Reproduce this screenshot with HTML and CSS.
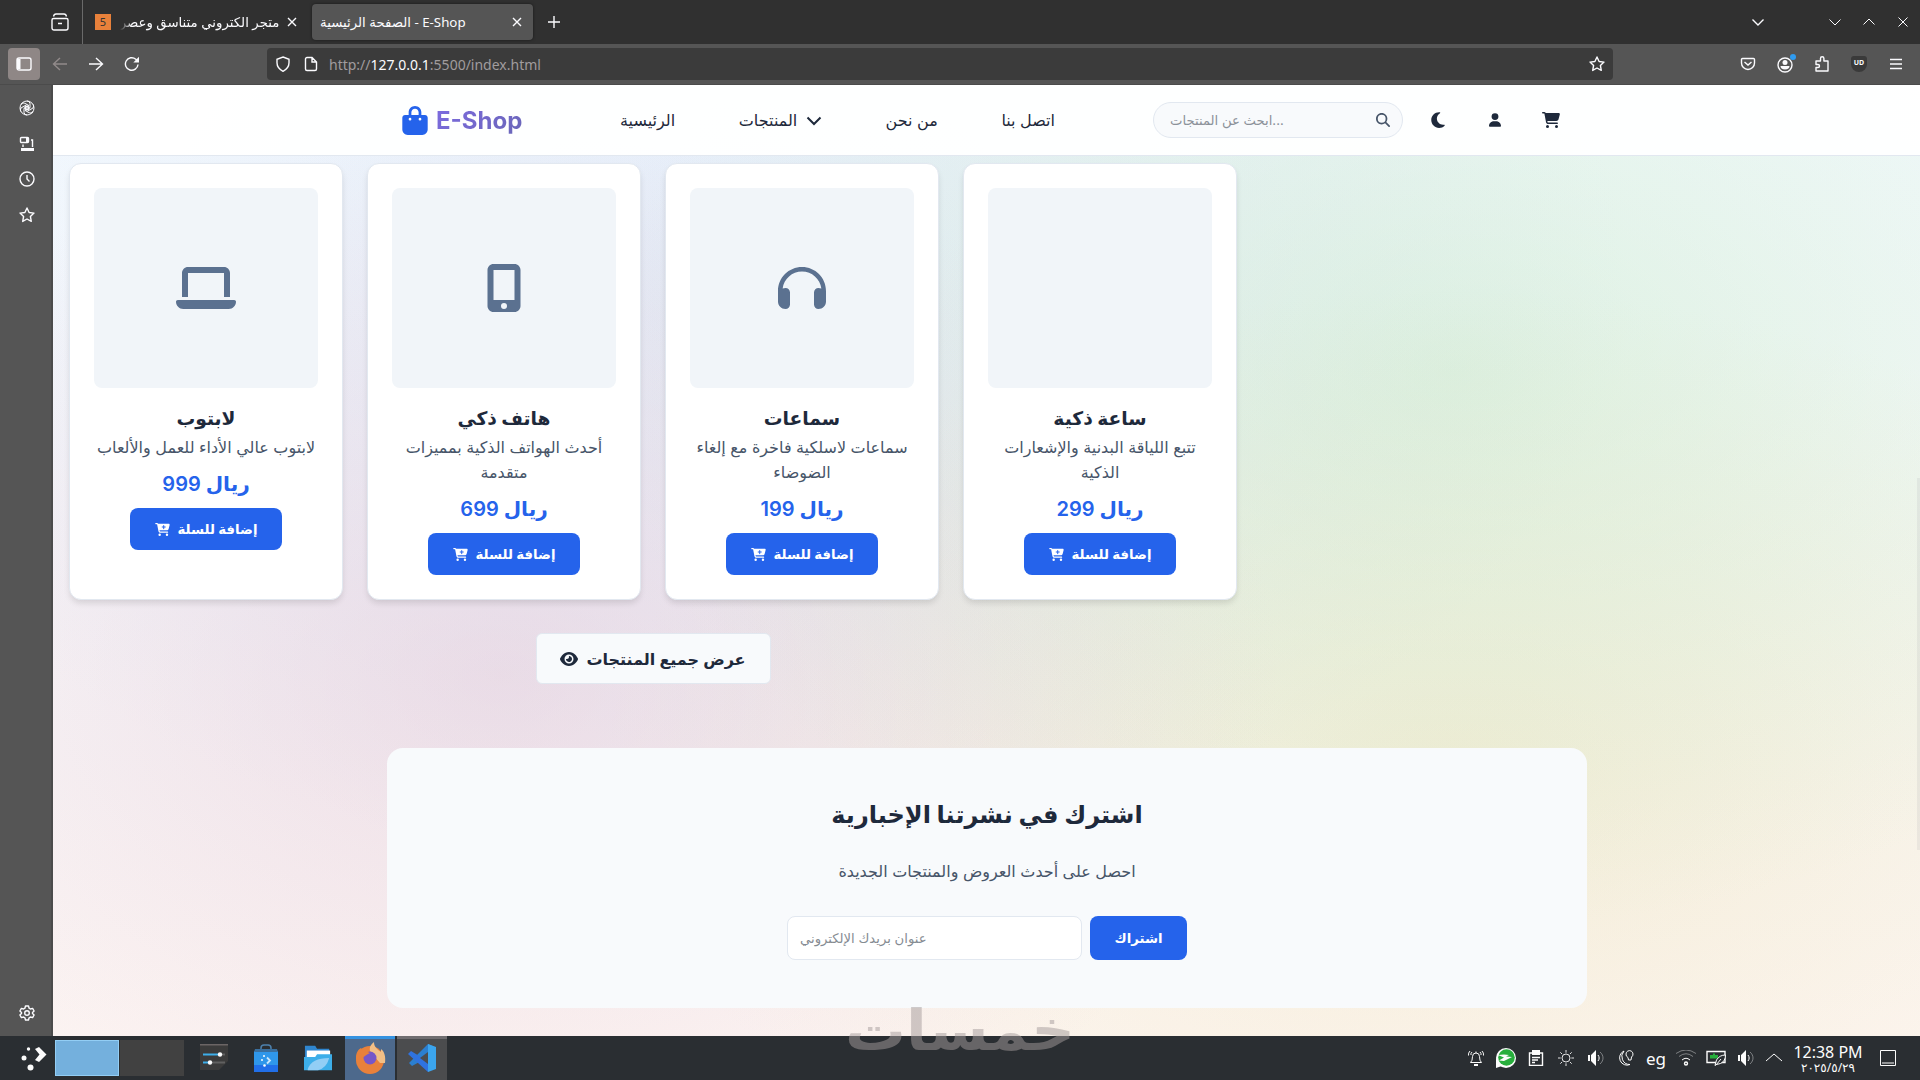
FILE: index.html
```html
<!DOCTYPE html>
<html lang="ar">
<head>
    <meta charset="UTF-8">
    <title>الصفحة الرئيسية - E-Shop</title>
    <link rel="stylesheet" href="styles.css">
</head>
<body>
    <!-- icon sprite -->
    <svg class="sprite">
        <symbol id="bag" viewBox="0 0 448 512"><path d="M160 112c0-35.3 28.7-64 64-64s64 28.7 64 64v48H160V112zm-48 48H48c-26.5 0-48 21.5-48 48V416c0 53 43 96 96 96H352c53 0 96-43 96-96V208c0-26.5-21.5-48-48-48H336V112C336 50.1 285.9 0 224 0S112 50.1 112 112v48zm24 48a24 24 0 1 1 0 48 24 24 0 1 1 0-48zm152 24a24 24 0 1 1 48 0 24 24 0 1 1 -48 0z"/></symbol>
        <symbol id="moon" viewBox="0 0 384 512"><path d="M223.5 32C100 32 0 132.3 0 256S100 480 223.5 480c60.6 0 115.5-24.2 155.8-63.4c5-4.9 6.3-12.5 3.1-18.7s-10.1-9.7-17-8.5c-9.8 1.7-19.8 2.6-30.1 2.6c-96.9 0-175.5-78.8-175.5-176c0-65.8 36-123.1 89.3-153.3c6.1-3.5 9.2-10.5 7.7-17.3s-7.3-11.9-14.3-12.5c-6.3-.5-12.6-.8-19-.8z"/></symbol>
        <symbol id="user" viewBox="0 0 448 512"><path d="M224 256A128 128 0 1 0 224 0a128 128 0 1 0 0 256zm-45.7 48C79.8 304 0 383.8 0 482.3C0 498.7 13.3 512 29.7 512H418.3c16.4 0 29.7-13.3 29.7-29.7C448 383.8 368.2 304 269.7 304H178.3z"/></symbol>
        <symbol id="cart" viewBox="0 0 576 512"><path d="M0 24C0 10.7 10.7 0 24 0H69.5c22 0 41.5 12.8 50.6 32h411c26.3 0 45.5 25 38.6 50.4l-41 152.3c-8.5 31.4-37 53.3-69.5 53.3H170.7l5.4 28.5c2.2 11.3 12.1 19.5 23.6 19.5H488c13.3 0 24 10.7 24 24s-10.7 24-24 24H199.7c-34.6 0-64.3-24.6-70.7-58.5L77.4 54.5c-.7-3.8-4-6.5-7.9-6.5H24C10.7 48 0 37.3 0 24zM128 464a48 48 0 1 1 96 0 48 48 0 1 1 -96 0zm336-48a48 48 0 1 1 0 96 48 48 0 1 1 0-96z"/></symbol>
        <symbol id="cart-plus" viewBox="0 0 576 512"><path fill-rule="evenodd" d="M0 24C0 10.7 10.7 0 24 0H69.5c22 0 41.5 12.8 50.6 32h411c26.3 0 45.5 25 38.6 50.4l-41 152.3c-8.5 31.4-37 53.3-69.5 53.3H170.7l5.4 28.5c2.2 11.3 12.1 19.5 23.6 19.5H488c13.3 0 24 10.7 24 24s-10.7 24-24 24H199.7c-34.6 0-64.3-24.6-70.7-58.5L77.4 54.5c-.7-3.8-4-6.5-7.9-6.5H24C10.7 48 0 37.3 0 24zM128 464a48 48 0 1 1 96 0 48 48 0 1 1 -96 0zm336-48a48 48 0 1 1 0 96 48 48 0 1 1 0-96zM252 160c0 11 9 20 20 20h44v44c0 11 9 20 20 20s20-9 20-20V180h44c11 0 20-9 20-20s-9-20-20-20H356V96c0-11-9-20-20-20s-20 9-20 20v44H272c-11 0-20 9-20 20z"/></symbol>
        <symbol id="search" viewBox="0 0 512 512"><path d="M416 208c0 45.9-14.9 88.3-40 122.7L502.6 457.4c12.5 12.5 12.5 32.8 0 45.3s-32.8 12.5-45.3 0L330.7 376c-34.4 25.2-76.8 40-122.7 40C93.1 416 0 322.9 0 208S93.1 0 208 0S416 93.1 416 208zM208 352a144 144 0 1 0 0-288 144 144 0 1 0 0 288z"/></symbol>
        <symbol id="eye" viewBox="0 0 576 512"><path d="M288 32c-80.8 0-145.5 36.8-192.6 80.6C48.6 156 17.3 208 2.5 243.7c-3.3 7.9-3.3 16.7 0 24.6C17.3 304 48.6 356 95.4 399.4C142.5 443.2 207.2 480 288 480s145.5-36.8 192.6-80.6c46.8-43.5 78.1-95.4 93-131.1c3.3-7.9 3.3-16.7 0-24.6c-14.9-35.7-46.2-87.7-93-131.1C433.5 68.8 368.8 32 288 32zM144 256a144 144 0 1 1 288 0 144 144 0 1 1 -288 0zm144-64c0 35.3-28.7 64-64 64c-7.1 0-13.9-1.2-20.3-3.3c-5.5-1.8-11.9 1.6-11.7 7.4c.3 6.9 1.3 13.8 3.2 20.7c13.7 51.2 66.4 81.6 117.6 67.9s81.6-66.4 67.9-117.6c-11.1-41.5-47.8-69.4-88.6-71.1c-5.8-.2-9.2 6.1-7.4 11.7c2.1 6.4 3.3 13.2 3.3 20.3z"/></symbol>
        <symbol id="laptop" viewBox="0 0 640 512"><path d="M128 32C92.7 32 64 60.7 64 96V352h64V96H512V352h64V96c0-35.3-28.7-64-64-64H128zM19.2 384C8.6 384 0 392.6 0 403.2C0 445.6 34.4 480 76.8 480H563.2c42.4 0 76.8-34.4 76.8-76.8c0-10.6-8.6-19.2-19.2-19.2H19.2z"/></symbol>
        <symbol id="mobile" viewBox="0 0 384 512"><path d="M16 64C16 28.7 44.7 0 80 0H304c35.3 0 64 28.7 64 64V448c0 35.3-28.7 64-64 64H80c-35.3 0-64-28.7-64-64V64zM224 448a32 32 0 1 0 -64 0 32 32 0 1 0 64 0zM304 64H80V384H304V64z"/></symbol>
        <symbol id="headphones" viewBox="0 0 512 512"><path d="M256 80C149.9 80 62.4 159.4 49.6 262c9.4-3.8 19.6-6 30.4-6c26.5 0 48 21.5 48 48V432c0 26.5-21.5 48-48 48c-44.2 0-80-35.8-80-80V384 336 288C0 146.6 114.6 32 256 32s256 114.6 256 256v48 48 16c0 44.2-35.8 80-80 80c-26.5 0-48-21.5-48-48V304c0-26.5 21.5-48 48-48c10.8 0 21 2.1 30.4 6C449.6 159.4 362.1 80 256 80z"/></symbol>
        <symbol id="close" viewBox="0 0 16 16"><path class="line bold" d="M4 4l8 8M12 4l-8 8"/></symbol>
        <symbol id="star" viewBox="0 0 16 16"><path class="line bold" stroke-linejoin="round" d="M8 1l2.100 4.500 4.900.6-3.600 3.400.9 4.900L8 12l-4.300 2.400.9-4.900L1 6.100l4.900-.6z"/></symbol>
        <symbol id="petal" viewBox="0 0 16 16"><path class="line" d="M8 1A3 3 0 0 1 11 3.500V7.800L8 9.500 5 7.800"/></symbol>
        <symbol id="volume" viewBox="0 0 16 16"><path d="M0 5h2v6H0zM3 5L8 0v16L3 11z"/><path class="line" d="M10 5c1.500 2 1.500 4 0 6"/><path class="line dim" d="M12 2c4 3.500 4 8.500 0 12"/></symbol>
    </svg>

    <div class="browser">
        <div class="tabs">
            <div class="tabs-start">
                <svg class="icon i18" viewBox="0 0 18 18"><path class="line bold" d="M2.500 5.500h13a1.500 1.500 0 0 1 1.500 1.500v8a2 2 0 0 1-2 2H3a2 2 0 0 1-2-2V7a1.500 1.500 0 0 1 1.500-1.500zM2.500 3.500Q3 1 5 1h8q2 0 2.500 2.500M7 10.500h4"/></svg>
            </div>
            <div class="tab">
                <span class="favicon">5</span>
                <span class="tab-title fade" dir="rtl">متجر الكتروني متناسق وعصر</span>
                <svg class="icon i16"><use href="#close"/></svg>
            </div>
            <div class="tab active">
                <span class="tab-title" dir="ltr">الصفحة الرئيسية - E-Shop</span>
                <svg class="icon i16"><use href="#close"/></svg>
            </div>
            <svg class="icon i16 new-tab" viewBox="0 0 16 16"><path class="line bold" d="M8 2v12M2 8h12"/></svg>
            <div class="window-buttons">
                <svg class="icon i16 all-tabs" viewBox="0 0 16 16"><path class="line bold" d="M2.500 5.500L8 11l5.500-5.500"/></svg>
                <svg class="icon i16" viewBox="0 0 16 16"><path class="line" d="M2.500 5.500L8 11l5.500-5.500"/></svg>
                <svg class="icon i16" viewBox="0 0 16 16"><path class="line" d="M2.500 10.500L8 5l5.500 5.500"/></svg>
                <svg class="icon i16" viewBox="0 0 16 16"><path class="line" d="M3.500 3.500l9 9M12.500 3.500l-9 9"/></svg>
            </div>
        </div>

        <div class="toolbar">
            <div class="sidebar-btn">
                <svg class="icon i16" viewBox="0 0 16 16"><rect class="line bold" x="1" y="2" width="14" height="12" rx="2"/><path d="M1 3h3.500v10H1z"/></svg>
            </div>
            <svg class="icon i16 back" viewBox="0 0 16 16"><path class="line bold" d="M15 8H1.500M8 2L1.500 8 8 14"/></svg>
            <svg class="icon i16 forward" viewBox="0 0 16 16"><path class="line bold" d="M1 8h13.500M8 2l6.500 6L8 14"/></svg>
            <svg class="icon i16 reload" viewBox="0 0 16 16"><path class="line bold" d="M14 8.500A6.300 6.300 0 1 1 11.800 3.200L14 5"/><path d="M15 .8V6.500H9.300z"/></svg>
            <div class="urlbar">
                <svg class="icon i16" viewBox="0 0 16 16"><path class="line bold" d="M8 1l6 2.300v3.500c0 4-2.500 6.700-6 8.500-3.500-1.800-6-4.500-6-8.500V3.300z"/></svg>
                <svg class="icon i16" viewBox="0 0 16 16"><path class="line bold" d="M4 1.500h5L13.500 6v7a1.500 1.500 0 0 1-1.500 1.500H4A1.500 1.500 0 0 1 2.500 13V3A1.500 1.500 0 0 1 4 1.500zM9 1.500V6h4.500"/></svg>
                <span class="url">http://<b>127.0.0.1</b>:5500/index.html</span>
                <svg class="icon i16"><use href="#star"/></svg>
            </div>
            <div class="toolbar-end">
                <svg class="icon i16" viewBox="0 0 16 16"><path class="line bold" d="M2.500 2.500h11a1 1 0 0 1 1 1V7a6.500 6.500 0 0 1-13 0V3.500a1 1 0 0 1 1-1zM4.500 6L8 9l3.500-3"/></svg>
                <div class="account">
                    <svg class="icon i16" viewBox="0 0 16 16"><circle class="line bold" cx="8" cy="8" r="7"/><circle cx="8" cy="5.500" r="2.500"/><path d="M3.500 9h9c0 2-1.500 3.500-4.500 3.500S3.500 11 3.500 9z"/></svg>
                    <span class="dot"></span>
                </div>
                <svg class="icon i16" viewBox="0 0 16 16"><path class="line bold" stroke-linejoin="round" d="M2 5h4.500V2.500a1.700 1.700 0 0 1 3.400 0V5H14v10H2v-3.500h2a1.500 1.500 0 0 0 0-3H2z"/></svg>
                <span class="ublock">UD</span>
                <svg class="icon i16" viewBox="0 0 16 16"><path class="line bold" d="M2 3.500h12M2 8h12M2 12.500h12"/></svg>
            </div>
        </div>

        <div class="main">
            <div class="sidebar">
                <svg class="icon i16" viewBox="0 0 16 16">
                    <use href="#petal"/>
                    <use href="#petal" transform="rotate(60 8 8)"/>
                    <use href="#petal" transform="rotate(120 8 8)"/>
                    <use href="#petal" transform="rotate(180 8 8)"/>
                    <use href="#petal" transform="rotate(240 8 8)"/>
                    <use href="#petal" transform="rotate(300 8 8)"/>
                    <circle class="line" cx="8" cy="8" r="7"/>
                </svg>
                <svg class="icon i16" viewBox="0 0 16 16"><rect class="line bold" x="1.500" y="1.500" width="8" height="5" rx="1"/><path d="M7 1.500h2.500v5H7z"/><path class="line bold" d="M12 4h1.500v7M4 8.500V11"/><path d="M2 12h13v3H2z"/></svg>
                <svg class="icon i16" viewBox="0 0 16 16"><circle class="line bold" cx="8" cy="8" r="7"/><path class="line bold" d="M8 4v4l2.500 2.500"/></svg>
                <svg class="icon i16"><use href="#star"/></svg>
                <svg class="icon i16 settings" viewBox="0 0 16 16"><circle class="line bold" cx="8" cy="8" r="2.300"/><path class="line bold" stroke-linejoin="round" d="M6.500 1h3l.6 2.200 1.300.8 2.200-.6 1.500 2.600L13.500 7.500v1l1.600 1.500-1.500 2.600-2.200-.6-1.300.8L9.500 15h-3l-.6-2.200-1.300-.8-2.200.6L.9 10l1.600-1.500v-1L.9 6l1.500-2.600 2.200.6 1.300-.8z"/></svg>
            </div>

            <div class="page">
                <nav class="navbar">
                    <div class="nav-inner">
                        <div class="logo">
                            <svg class="logo-icon"><use href="#bag"/></svg>
                            <span>E-Shop</span>
                        </div>
                        <div class="nav-links">
                            <a>الرئيسية</a>
                            <a>المنتجات <svg class="chevron" viewBox="0 0 16 10"><path d="M1.500 1.500L8 8l6.500-6.500"/></svg></a>
                            <a>من نحن</a>
                            <a>اتصل بنا</a>
                        </div>
                        <div class="search-box">
                            <span>ابحث عن المنتجات...</span>
                            <svg class="search-icon"><use href="#search"/></svg>
                        </div>
                        <div class="nav-icons">
                            <svg class="moon"><use href="#moon"/></svg>
                            <svg class="user"><use href="#user"/></svg>
                            <svg class="cart"><use href="#cart"/></svg>
                        </div>
                    </div>
                </nav>

                <section class="products">
                    <div class="product-grid">
                        <div class="product-card">
                            <div class="product-image"><svg class="w60"><use href="#laptop"/></svg></div>
                            <h3>لابتوب</h3>
                            <p>لابتوب عالي الأداء للعمل والألعاب</p>
                            <div class="price">999 ريال</div>
                            <button class="btn-add"><svg><use href="#cart-plus"/></svg><span>إضافة للسلة</span></button>
                        </div>
                        <div class="product-card">
                            <div class="product-image"><svg class="w36"><use href="#mobile"/></svg></div>
                            <h3>هاتف ذكي</h3>
                            <p>أحدث الهواتف الذكية بمميزات<br>متقدمة</p>
                            <div class="price">699 ريال</div>
                            <button class="btn-add"><svg><use href="#cart-plus"/></svg><span>إضافة للسلة</span></button>
                        </div>
                        <div class="product-card">
                            <div class="product-image"><svg class="w48"><use href="#headphones"/></svg></div>
                            <h3>سماعات</h3>
                            <p>سماعات لاسلكية فاخرة مع إلغاء<br>الضوضاء</p>
                            <div class="price">199 ريال</div>
                            <button class="btn-add"><svg><use href="#cart-plus"/></svg><span>إضافة للسلة</span></button>
                        </div>
                        <div class="product-card">
                            <div class="product-image"></div>
                            <h3>ساعة ذكية</h3>
                            <p>تتبع اللياقة البدنية والإشعارات<br>الذكية</p>
                            <div class="price">299 ريال</div>
                            <button class="btn-add"><svg><use href="#cart-plus"/></svg><span>إضافة للسلة</span></button>
                        </div>
                    </div>
                    <button class="btn-all"><svg><use href="#eye"/></svg><span>عرض جميع المنتجات</span></button>
                </section>

                <section class="newsletter">
                    <h2>اشترك في نشرتنا الإخبارية</h2>
                    <p>احصل على أحدث العروض والمنتجات الجديدة</p>
                    <div class="newsletter-form">
                        <div class="email-input"><span>عنوان بريدك الإلكتروني</span></div>
                        <button class="btn-subscribe"><span>اشتراك</span></button>
                    </div>
                </section>
                <div class="scrollbar"></div>
            </div>
        </div>
    </div>

    <div class="taskbar">
        <svg class="launcher" viewBox="0 0 26 26"><circle cx="7.500" cy="4" r="1.700"/><circle cx="3" cy="13" r="2.500"/><circle cx="9.500" cy="22.500" r="3"/><path d="M14 4l4-2 7.500 7.500L18 17l-4-2 4.500-5.500z"/></svg>
        <div class="pager current"></div>
        <div class="pager"></div>
        <div class="launchers">
            <svg viewBox="0 0 28 28"><path fill="#3b3b3b" d="M0 1h28v16L19 26H0z"/><path fill="#6b6565" d="M0 0h28v1.500H0z"/><path fill="#3daee9" d="M3 9.500h16v2H3zM3 17.500h6v2H3z"/><path fill="#606060" d="M21 9.500h4v2h-4zM11 17.500h14v2H11z"/><circle cx="20" cy="10.500" r="2.200"/><circle cx="10" cy="18.500" r="2.200"/></svg>
            <svg viewBox="0 0 28 28"><path fill="none" stroke="#4d81ad" stroke-width="1.500" d="M9 8V4q0-3 3-3h4q3 0 3 3v4"/><path fill="#2f97ea" d="M2 7h24v20H2z"/><path fill="#3a6f9e" d="M3 5h22l1 3H2z"/><path fill="#216fe8" d="M2 21h24v7H2z"/><circle cx="12" cy="12" r="1"/><circle cx="10" cy="16" r="1"/><circle cx="12.500" cy="21.500" r="1.300"/><path fill="none" stroke="#c9e6fb" stroke-width="1.800" d="M15 13.500l3 3-3 3"/></svg>
            <svg viewBox="0 0 30 28"><path fill="#2f86d0" d="M1 1h11l2 3h13v10H1z"/><path fill="#fff" d="M3 6h25v8H3z"/><path fill="#3daee9" d="M0 13h12l2-3h16v17H0z"/><path fill="#92cef5" d="M4 26Q8 14 27 14Q24 25 15 27H4z"/></svg>
        </div>
        <div class="task firefox">
            <svg viewBox="0 0 32 32"><circle fill="#e8813b" cx="16" cy="18" r="14"/><path fill="#e8813b" d="M2 17C2 10 4 8 7 6l2 4 4-2v10z"/><path fill="#f2bf86" d="M20 0c-6 5-5 9-1 13l7 8 5 0c1-7-1-12-4-14v3C23 7 20 5 20 0z"/><circle fill="#7657c9" cx="16" cy="16" r="6.500"/><path fill="#e8813b" d="M6 9c5-1 7 1 10 2-2 1-4 2-5 3L8 16z"/></svg>
        </div>
        <div class="task vscode">
            <svg viewBox="0 0 28 28"><path fill="#2b7fd0" d="M20 0l7 3-1 7L4 22l-3-3z"/><path fill="#2f73e0" d="M3 7L0 10l20 18 6-7z"/><path fill="#3ba5ee" d="M20 0l8 3v22l-8 3z"/><path fill="#4b4c4e" d="M20 8v12l-8-6z"/></svg>
        </div>
        <div class="tray">
            <svg viewBox="0 0 16 16"><path class="line" d="M2.500 12.500Q4.500 11 4.500 6.500a3.500 3.500 0 0 1 7 0Q11.500 11 13.500 12.500zM8 1.500V3M2 1Q0 3 .5 5.500M14 1q2 2 1.500 4.500M4 2Q2.500 3.500 3 5M12 2q1.500 1.500 1 3"/><path d="M6 14h4v2H6z"/></svg>
            <svg class="chat" viewBox="0 0 20 20"><circle cx="10" cy="10" r="10"/><path d="M0 10v10l6-2z"/><circle fill="#27ae3c" cx="10.500" cy="9.500" r="8.300"/><path d="M2 7l6-.5 5 .5-3 1.500 6 .5-8 4-5-.5 5-3z"/></svg>
            <svg viewBox="0 0 16 16"><path class="line bold" d="M1.500 3h13v12.500h-13zM4 7.500h8M4 10h6M4 12.500h3"/><path d="M4 0h8v5H4z"/></svg>
            <svg viewBox="0 0 18 18"><circle class="line" cx="9" cy="9" r="4.500"/><path class="line" d="M9 0v3M9 15v3M0 9h3M15 9h3M2.600 2.600l2 2M13.400 13.400l2 2M15.400 2.600l-2 2M4.600 13.400l-2 2"/></svg>
            <svg><use href="#volume"/></svg>
            <svg viewBox="0 0 16 16"><path class="line" d="M6 1a7 7 0 1 0 6 13.500A8 8 0 0 1 6 1zM8 4a3.500 3.500 0 1 1 5.500 3l-.5 3h-2.500L10 7.500A3.500 3.500 0 0 1 8 4z"/></svg>
            <span class="lang">eg</span>
            <svg class="wifi" viewBox="0 0 20 16"><circle class="line bold" cx="10" cy="13.500" r="1.500"/><path class="line" d="M6 10q4-3.500 8 0"/><path class="line dim" d="M3 6.500q7-5.500 14 0M0 3.500q10-7 20 0"/></svg>
            <svg class="battery" viewBox="0 0 20 16"><path class="line bold" d="M1 1.500h18v11H1z"/><path fill="#27ae3c" d="M4 5h3V3.500h2V5h3v3.500H4z"/><path fill="#2a2e32" stroke="currentColor" d="M9 15.500l1.500-5.500q3-5 9-5 0 6-5 8.500l-4 1zM10 15l5-6"/></svg>
            <svg><use href="#volume"/></svg>
            <svg class="up" viewBox="0 0 16 16"><path class="line" d="M0 11l8-7 8 7"/></svg>
        </div>
        <div class="clock">
            <span>12:38 PM</span>
            <span class="date">٢٠٢٥/٥/٢٩</span>
        </div>
        <svg class="desktop" viewBox="0 0 16 16"><path class="line" d="M.5.5h15v15H.5zM2 13h12"/></svg>
    </div>

    <svg class="watermark" viewBox="0 0 232 80"><text x="1" y="52" textLength="230" lengthAdjust="spacingAndGlyphs">خمسات</text></svg>
</body>
</html>
```
FILE: styles.css
```css
* {
    margin: 0;
    padding: 0;
    box-sizing: border-box;
}
body {
    width: 1920px;
    height: 1080px;
    overflow: hidden;
    display: flex;
    flex-direction: column;
    font-family: 'Inter', 'DejaVu Sans', sans-serif;
    color: #1e293b;
}
.sprite {
    display: none;
}
svg {
    fill: currentColor;
    flex-shrink: 0;
}
.line {
    fill: none;
    stroke: currentColor;
    stroke-width: 1;
}
.bold { stroke-width: 1.4; }
.dim { opacity: 0.4; }
.i16 { width: 16px; height: 16px; }
.i18 { width: 18px; height: 18px; }

/* Browser window */
.browser {
    height: 1036px;
    display: flex;
    flex-direction: column;
    font-family: 'Noto Sans', 'DejaVu Sans', sans-serif;
    color: #fbfbfe;
}
.tabs {
    height: 44px;
    background: #303030;
    display: flex;
    align-items: center;
    font-size: 13.3px;
}
.tabs-start {
    width: 83px;
    height: 44px;
    padding-left: 51px;
    display: flex;
    align-items: center;
    border-right: 1px solid #6a6a6a;
}
.tab {
    width: 221px;
    height: 36px;
    margin-left: 4px;
    padding: 0 8px;
    display: flex;
    align-items: center;
    justify-content: space-between;
    border-radius: 4px;
    white-space: nowrap;
}
.tab.active {
    background: #555;
    box-shadow: 0 0 3px rgba(0, 0, 0, 0.5);
}
.favicon {
    width: 16px;
    height: 16px;
    background: #e8813b;
    color: #333;
    font-size: 11px;
    line-height: 16px;
    text-align: center;
}
.fade {
    margin-right: -4px;
    mask-image: linear-gradient(to right, transparent, #000 12px);
}
.new-tab { margin-left: 13px; }
.window-buttons {
    display: flex;
    gap: 18px;
    margin-left: auto;
    padding-right: 9px;
}
.all-tabs { margin-right: 43px; }
.toolbar {
    height: 41px;
    background: #555;
    display: flex;
    align-items: center;
    padding: 1px 16px 1px 8px;
    border-bottom: 1px solid #4b4b4b;
}
.sidebar-btn {
    width: 32px;
    height: 32px;
    border-radius: 4px;
    background: #8f8786;
    display: flex;
    align-items: center;
    justify-content: center;
}
.back { margin-left: 12px; color: #918a8a; }
.forward { margin-left: 20px; }
.reload { margin-left: 20px; }
.urlbar {
    width: 1346px;
    height: 32px;
    margin-left: 127px;
    padding: 0 8px;
    display: flex;
    align-items: center;
    gap: 12px;
    border-radius: 4px;
    background: #3b3b3b;
}
.url {
    flex: 1;
    margin-left: -2px;
    font-size: 14px;
    color: #a09c9e;
}
.url b {
    font-weight: normal;
    color: #fbfbfe;
}
.toolbar-end {
    margin-left: auto;
    display: flex;
    gap: 21px;
}
.account {
    position: relative;
    height: 16px;
}
.dot {
    position: absolute;
    top: -2px;
    right: -3px;
    width: 6px;
    height: 6px;
    border-radius: 50%;
    background: #2f9bf0;
}
.ublock {
    width: 16px;
    height: 16px;
    background: #3a3a3a;
    border-radius: 3px 3px 8px 8px;
    font-size: 7px;
    line-height: 14px;
    text-align: center;
    font-weight: bold;
}
.main {
    flex: 1;
    display: flex;
}
.sidebar {
    width: 53px;
    background: #555;
    border-right: 2px solid #4b4b4b;
    padding: 15px 0 15px 19px;
    display: flex;
    flex-direction: column;
    gap: 19.5px;
}
.settings { margin-top: auto; }

/* Shop page */
.page {
    flex: 1;
    position: relative;
    font-family: 'Inter', 'DejaVu Sans', sans-serif;
    color: #1e293b;
    background:
        radial-gradient(ellipse 780px 540px at 24% 62%, rgba(214, 172, 198, 0.34), transparent),
        radial-gradient(ellipse 850px 560px at 75% 30%, rgba(185, 228, 185, 0.4), transparent),
        radial-gradient(ellipse 850px 480px at 75% 72%, rgba(232, 218, 160, 0.38), transparent),
        radial-gradient(ellipse 900px 600px at 36% 20%, rgba(200, 212, 236, 0.38), transparent),
        linear-gradient(180deg, #f4faff 0%, #f8f9fa 55%, #fdf6f3 100%);
}
.navbar {
    height: 71px;
    background: rgba(255, 255, 255, 0.95);
    border-bottom: 1px solid #e2e8f0;
}
.nav-inner {
    height: 70px;
    padding-left: 349px;
    display: flex;
    align-items: center;
}
.logo {
    width: 218px;
    display: flex;
    align-items: center;
    gap: 8px;
    font-size: 24px;
    font-weight: 700;
    color: #2563eb;
}
.logo-icon {
    width: 26px;
    height: 29px;
}
.logo span {
    background: linear-gradient(135deg, #7c6be0, #6a66b8);
    background-clip: text;
    color: transparent;
}
.nav-links {
    width: 533px;
    display: flex;
    gap: 63.7px;
    font-size: 16px;
    white-space: nowrap;
}
.chevron {
    width: 16px;
    height: 10px;
    margin-left: 4px;
    fill: none;
    stroke: #1e293b;
    stroke-width: 2;
}
.search-box {
    width: 250px;
    height: 36px;
    padding: 0 12px 0 16px;
    border: 1px solid #e2e8f0;
    border-radius: 18px;
    background: #f8fafc;
    display: flex;
    align-items: center;
    justify-content: space-between;
    font-size: 13.2px;
    color: #8b9199;
}
.search-icon {
    width: 14px;
    height: 14px;
    color: #475569;
}
.nav-icons {
    display: flex;
    align-items: center;
    margin-left: 28px;
}
.moon { width: 14px; height: 18px; }
.user { width: 12px; height: 14px; margin-left: 44px; }
.cart { width: 18px; height: 16px; margin-left: 41px; }

.products {
    width: 1200px;
    padding: 7px 16px 0;
    text-align: center;
}
.product-grid {
    display: grid;
    grid-template-columns: repeat(4, 1fr);
    gap: 24px;
}
.product-card {
    height: 437px;
    padding: 24px;
    background: #fff;
    border: 1px solid #e2e8f0;
    border-radius: 12px;
    box-shadow: 0 4px 6px -1px rgba(0, 0, 0, 0.12);
}
.product-image {
    height: 200px;
    margin-bottom: 16px;
    border-radius: 8px;
    background: #f1f5f9;
    color: #5b7190;
    display: flex;
    align-items: center;
    justify-content: center;
}
.product-image svg { height: 48px; }
.w60 { width: 60px; }
.w48 { width: 48px; }
.w36 { width: 36px; }
.product-card h3 {
    font-size: 18.7px;
    line-height: 29px;
}
.product-card p {
    font-size: 16px;
    line-height: 25px;
    color: #475569;
    white-space: nowrap;
    margin: 2px 0 1px;
}
.price {
    font-size: 20px;
    font-weight: 600;
    line-height: 32px;
    margin: 8px 0;
    color: #2563eb;
}
button {
    border: none;
    font-family: inherit;
    font-weight: 600;
    color: #fff;
    background: #2563eb;
    border-radius: 8px;
    display: inline-flex;
    align-items: center;
    justify-content: center;
    gap: 8px;
    white-space: nowrap;
}
.btn-add {
    width: 152px;
    height: 42px;
    font-size: 13.3px;
}
.btn-add svg {
    width: 15px;
    height: 13px;
}
.btn-all {
    width: 235px;
    height: 51px;
    margin-top: 33px;
    font-size: 16px;
    color: #1e293b;
    background: #f8fafc;
    border: 1px solid #e2e8f0;
    border-radius: 6px;
}
.btn-all svg {
    width: 18px;
    height: 16px;
}
.newsletter {
    width: 1200px;
    height: 260px;
    margin: 64px 0 0 334px;
    padding: 48px 0;
    border-radius: 16px;
    background: #f8fafc;
    text-align: center;
}
.newsletter h2 {
    font-size: 24px;
    line-height: 38px;
}
.newsletter p {
    margin-top: 24px;
    font-size: 16px;
    line-height: 26px;
    color: #475569;
}
.newsletter-form {
    margin-top: 32px;
    display: flex;
    justify-content: center;
    gap: 8px;
}
.email-input {
    width: 295px;
    height: 44px;
    padding-left: 12px;
    display: flex;
    align-items: center;
    background: #fff;
    border: 1px solid #e2e8f0;
    border-radius: 8px;
    font-size: 13.2px;
    color: #858b92;
}
.btn-subscribe {
    width: 97px;
    height: 44px;
    font-size: 13.3px;
}
.scrollbar {
    position: absolute;
    right: 0;
    top: 393px;
    width: 3px;
    height: 372px;
    background: rgba(160, 160, 170, 0.15);
}

/* Desktop panel */
.taskbar {
    height: 44px;
    background: #2a2e32;
    display: flex;
    align-items: center;
    color: #fcfcfc;
    font-family: 'Noto Sans', 'DejaVu Sans', sans-serif;
}
.launcher {
    width: 26px;
    height: 26px;
    margin: 0 8px 0 21px;
}
.pager {
    width: 64px;
    height: 36px;
    margin-right: 1px;
    background: #414141;
}
.pager.current {
    background: #74b0dd;
    border: 1px solid #93cef5;
}
.launchers {
    display: flex;
    gap: 24px;
    margin: 0 13px 0 15px;
}
.launchers svg { width: 28px; height: 28px; }
.task {
    width: 50px;
    height: 44px;
    margin-right: 2px;
    border-top: 3px solid #3592e0;
    background: #4d698c;
    display: flex;
    align-items: center;
    justify-content: center;
}
.task svg { width: 32px; height: 32px; margin-top: -4px; }
.task.vscode {
    background: #4b4c4e;
    border-color: #706d70;
}
.task.vscode svg { width: 28px; height: 28px; margin-top: -3px; }
.tray {
    margin-left: auto;
    display: flex;
    align-items: center;
}
.tray svg {
    width: 16px;
    height: 16px;
    margin: 0 7px;
}
.tray .chat {
    width: 20px;
    height: 20px;
    margin: 0 5px;
}
.tray .wifi, .tray .battery {
    width: 20px;
    margin: 0 5px;
}
.lang {
    width: 30px;
    text-align: center;
    font-size: 17px;
}
.tray .up { margin: 0 12px 0 5px; }
.clock {
    width: 68px;
    display: flex;
    flex-direction: column;
    align-items: center;
    font-size: 16px;
    line-height: 18px;
    white-space: nowrap;
}
.date {
    font-size: 12px;
    line-height: 13px;
}
.desktop {
    width: 16px;
    height: 16px;
    margin: 0 24px 0 18px;
}

.watermark {
    position: absolute;
    left: 844px;
    top: 998px;
    width: 232px;
    height: 80px;
    overflow: visible;
    color: #a59c9c;
    opacity: 0.5;
    font-family: 'DejaVu Sans', sans-serif;
    font-size: 56px;
    font-weight: bold;
}
```
